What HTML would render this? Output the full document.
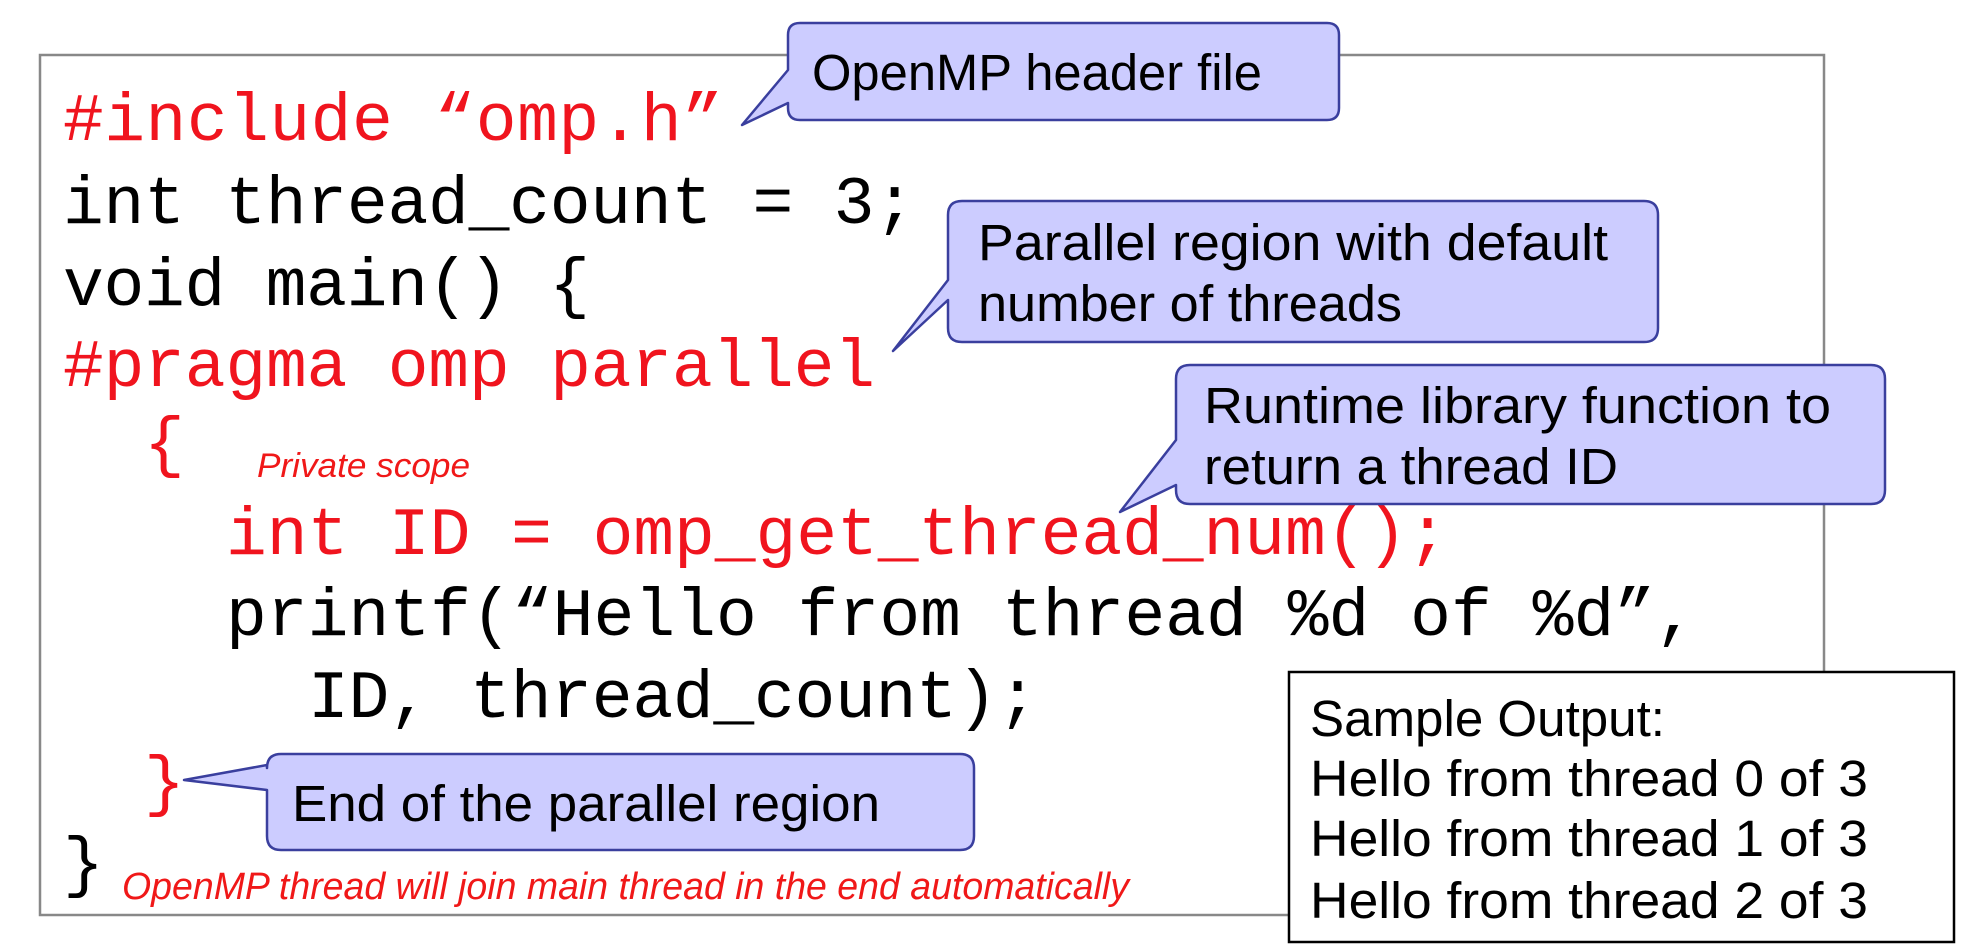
<!DOCTYPE html>
<html><head><meta charset="utf-8"><style>
html,body{margin:0;padding:0;background:#fff;width:1966px;height:952px;overflow:hidden}
svg{display:block}
.c{font-family:"Liberation Mono",monospace;font-size:68px}
.s{font-family:"Liberation Sans",sans-serif;font-size:51px;fill:#000}
.h{font-family:"Liberation Sans",sans-serif;font-style:italic;fill:#f01818}
</style></head><body>
<svg width="1966" height="952" viewBox="0 0 1966 952" xmlns="http://www.w3.org/2000/svg">
<rect x="40" y="55" width="1784" height="860" fill="#fff" stroke="#888" stroke-width="2.5"/>

<g class="c">
<text x="63" y="140" fill="#f0141e" textLength="660">#include “omp.h”</text>
<text x="63" y="223" fill="#000" textLength="852">int thread_count = 3;</text>
<text x="63" y="305" fill="#000" textLength="527">void main() {</text>
<text x="63" y="386" fill="#f0141e" textLength="812">#pragma omp parallel</text>
<text x="144" y="464" fill="#f0141e">{</text>
<text x="226" y="554" fill="#f0141e" textLength="1222">int ID = omp_get_thread_num();</text>
<text x="226" y="635" fill="#000" textLength="1470">printf(“Hello from thread %d of %d”,</text>
<text x="308" y="717" fill="#000" textLength="730">ID, thread_count);</text>
<text x="144" y="803" fill="#f0141e">}</text>
<text x="63" y="884" fill="#000">}</text>
</g>

<text class="h" x="257" y="477" font-size="34" textLength="213" lengthAdjust="spacingAndGlyphs">Private scope</text>
<text class="h" x="122" y="899" font-size="38" textLength="1007" lengthAdjust="spacingAndGlyphs">OpenMP thread will join main thread in the end automatically</text>

<g fill="#ccccff" stroke="#3a3f9e" stroke-width="2.5" stroke-linejoin="round">
<path d="M800,23 H1327 Q1339,23 1339,35 V108 Q1339,120 1327,120 H800 Q788,120 788,108 V103 L742,125 L788,70 V35 Q788,23 800,23 Z"/>
<path d="M962,201 H1644 Q1658,201 1658,215 V328 Q1658,342 1644,342 H962 Q948,342 948,328 V300 L893,351 L948,280 V215 Q948,201 962,201 Z"/>
<path d="M1190,365 H1871 Q1885,365 1885,379 V490 Q1885,504 1871,504 H1190 Q1176,504 1176,490 V485 L1120,512 L1176,440 V379 Q1176,365 1190,365 Z"/>
<path d="M281,754 H960 Q974,754 974,768 V836 Q974,850 960,850 H281 Q267,850 267,836 V790 L184,780 L267,765 V768 Q267,754 281,754 Z"/>
</g>
<g class="s">
<text x="812" y="90" textLength="450" lengthAdjust="spacingAndGlyphs">OpenMP header file</text>
<text x="978" y="260" textLength="630" lengthAdjust="spacingAndGlyphs">Parallel region with default</text>
<text x="978" y="321" textLength="424" lengthAdjust="spacingAndGlyphs">number of threads</text>
<text x="1204" y="423" textLength="627" lengthAdjust="spacingAndGlyphs">Runtime library function to</text>
<text x="1204" y="484" textLength="414" lengthAdjust="spacingAndGlyphs">return a thread ID</text>
<text x="292" y="821" textLength="588" lengthAdjust="spacingAndGlyphs">End of the parallel region</text>
</g>

<rect x="1289" y="672" width="665" height="270" fill="#fff" stroke="#000" stroke-width="2.5"/>
<g class="s">
<text x="1310" y="736" textLength="355" lengthAdjust="spacingAndGlyphs">Sample Output:</text>
<text x="1310" y="796" textLength="558" lengthAdjust="spacingAndGlyphs">Hello from thread 0 of 3</text>
<text x="1310" y="856" textLength="558" lengthAdjust="spacingAndGlyphs">Hello from thread 1 of 3</text>
<text x="1310" y="918" textLength="558" lengthAdjust="spacingAndGlyphs">Hello from thread 2 of 3</text>
</g>
</svg>
</body></html>
